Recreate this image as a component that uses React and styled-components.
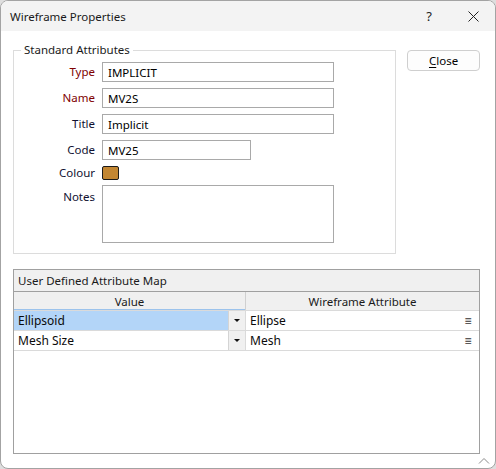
import React from "react"
import styled, { createGlobalStyle } from "styled-components"

const GlobalStyle = createGlobalStyle`
  html, body {
    margin: 0;
    padding: 0;
    background: #dedede;
  }
  * {
    box-sizing: border-box;
  }
`

const Window = styled.div`
  position: relative;
  width: 496px;
  height: 469px;
  display: flex;
  flex-direction: column;
  background: #ffffff;
  border: 1px solid #a3a3a3;
  border-radius: 8px;
  overflow: hidden;
  font-family: "Noto Sans", "Open Sans", sans-serif;
  font-size: 11.5px;
  color: #000;
`

const TitleBar = styled.div`
  height: 30px;
  flex: none;
  display: flex;
  align-items: center;
  background: #f3f3f3;
  padding-left: 9px;
`

const Title = styled.div`
  flex: 1;
  font-size: 11.5px;
  color: #1a1a1a;
`

const TitleButton = styled.div`
  width: 44px;
  height: 30px;
  display: flex;
  align-items: center;
  justify-content: center;
  color: #222;
  font-size: 13px;
`

const Body = styled.div`
  flex: 1;
  display: flex;
  flex-direction: column;
  padding: 11px 15px 14px 12px;
  gap: 15px;
`

const TopRow = styled.div`
  display: flex;
  align-items: flex-start;
  gap: 11px;
`

const GroupBox = styled.fieldset`
  margin: 0;
  width: 384px;
  padding: 4px 0 10px 0;
  border: 1px solid #dcdcdc;
  min-width: 0;
`

const Legend = styled.legend`
  margin-left: 7px;
  padding: 0 3px;
  line-height: 16px;
  color: #1a1a1a;
`

const Form = styled.div`
  display: grid;
  grid-template-columns: 81px 1fr;
  column-gap: 7px;
  row-gap: 6px;
  align-items: center;
`

const Label = styled.div`
  text-align: right;
  line-height: 14px;
  color: ${p => (p.$required ? "#800000" : "#101030")};
  align-self: ${p => (p.$top ? "start" : "center")};
  padding-top: ${p => (p.$top ? "4px" : "0")};
`

const TextInput = styled.div`
  width: ${p => p.$w || 232}px;
  height: 20px;
  border: 1px solid #a9a9a9;
  padding: 0 5px;
  display: flex;
  align-items: center;
  color: #000;
`

const NotesBox = styled.div`
  width: 232px;
  height: 58px;
  margin-top: -1px;
  border: 1px solid #a9a9a9;
`

const Swatch = styled.div`
  width: 17px;
  height: 14px;
  border: 1px solid #1a1a1a;
  border-radius: 2px;
  background: #c28632;
  margin-top: -1px;
`

const CloseButton = styled.button`
  margin-top: 8px;
  width: 73px;
  height: 21px;
  border: 1px solid #cfcfcf;
  border-radius: 4px;
  background: #fdfdfd;
  font-family: inherit;
  font-size: 11.5px;
  color: #000;
  padding: 0;
  u {
    text-decoration: underline;
    text-underline-offset: 2px;
  }
`

const MapPanel = styled.div`
  flex: 1;
  display: flex;
  flex-direction: column;
  border: 1px solid #a0a0a0;
`

const PanelHeader = styled.div`
  height: 22px;
  flex: none;
  display: flex;
  align-items: center;
  padding-left: 4px;
  background: #f0f0f0;
  border-bottom: 1px solid #a0a0a0;
  color: #1a1a1a;
`

const Row = styled.div`
  display: grid;
  flex: none;
  grid-template-columns: 232px 1fr;
  height: ${p => p.$h || 20}px;
  border-bottom: 1px solid #dadada;
`

const HeadCell = styled.div`
  display: flex;
  align-items: center;
  justify-content: center;
  background: #f0f0f0;
  border-right: 1px solid #d0d0d0;
  color: #1a1a1a;
  box-shadow: ${p => (p.$active ? "inset 0 -1px 0 #9cc3ec" : "none")};
  &:last-child {
    border-right: none;
  }
`

const Cell = styled.div`
  display: flex;
  align-items: center;
  background: ${p => (p.$selected ? "#b3d5f8" : "#ffffff")};
  border-right: 1px solid #dadada;
  &:last-child {
    border-right: none;
  }
`

const CellText = styled.span`
  flex: 1;
  padding-left: 4px;
  font-size: 12px;
  color: #0a0a0a;
`

const DropButton = styled.div`
  width: 17px;
  height: 100%;
  background: #f0f0f0;
  border-left: 1px solid #d4d4d4;
  display: flex;
  align-items: center;
  justify-content: center;
`

const Arrow = styled.div`
  width: 0;
  height: 0;
  border-left: 3px solid transparent;
  border-right: 3px solid transparent;
  border-top: 3px solid #111;
`

const MenuGlyph = styled.span`
  width: 22px;
  text-align: center;
  color: #333;
  font-size: 12px;
`

const Grip = styled.svg`
  position: absolute;
  right: 5px;
  bottom: 4px;
`

const fields = [
  { label: "Type", value: "IMPLICIT", required: true },
  { label: "Name", value: "MV2S", required: true },
  { label: "Title", value: "Implicit" },
  { label: "Code", value: "MV25", w: 149 },
]

const rows = [
  { value: "Ellipsoid", attr: "Ellipse", selected: true },
  { value: "Mesh Size", attr: "Mesh" },
]

const App = () => {
  return (
    <>
      <GlobalStyle />
      <Window>
        <TitleBar>
          <Title>Wireframe Properties</Title>
          <TitleButton>?</TitleButton>
          <TitleButton>
            <svg width="11" height="11" viewBox="0 0 11 11">
              <path d="M0.5 0.5 L10.5 10.5 M10.5 0.5 L0.5 10.5" stroke="#222" strokeWidth="1" />
            </svg>
          </TitleButton>
        </TitleBar>
        <Body>
          <TopRow>
            <GroupBox>
              <Legend>Standard Attributes</Legend>
              <Form>
                {fields.map(f => (
                  <React.Fragment key={f.label}>
                    <Label $required={f.required}>{f.label}</Label>
                    <TextInput $w={f.w}>{f.value}</TextInput>
                  </React.Fragment>
                ))}
                <Label>Colour</Label>
                <Swatch />
                <Label $top>Notes</Label>
                <NotesBox />
              </Form>
            </GroupBox>
            <CloseButton>
              <u>C</u>lose
            </CloseButton>
          </TopRow>
          <MapPanel>
            <PanelHeader>User Defined Attribute Map</PanelHeader>
            <Row $h={19}>
              <HeadCell $active>Value</HeadCell>
              <HeadCell>Wireframe Attribute</HeadCell>
            </Row>
            {rows.map(r => (
              <Row key={r.value}>
                <Cell $selected={r.selected}>
                  <CellText>{r.value}</CellText>
                  <DropButton>
                    <Arrow />
                  </DropButton>
                </Cell>
                <Cell>
                  <CellText>{r.attr}</CellText>
                  <MenuGlyph>≡</MenuGlyph>
                </Cell>
              </Row>
            ))}
          </MapPanel>
        </Body>
        <Grip width="12" height="7" viewBox="0 0 12 7">
          <path d="M1 6.5 L6 1.5 L11 6.5" stroke="#8a8a8a" fill="none" strokeWidth="1" />
        </Grip>
      </Window>
    </>
  )
}

export default App
